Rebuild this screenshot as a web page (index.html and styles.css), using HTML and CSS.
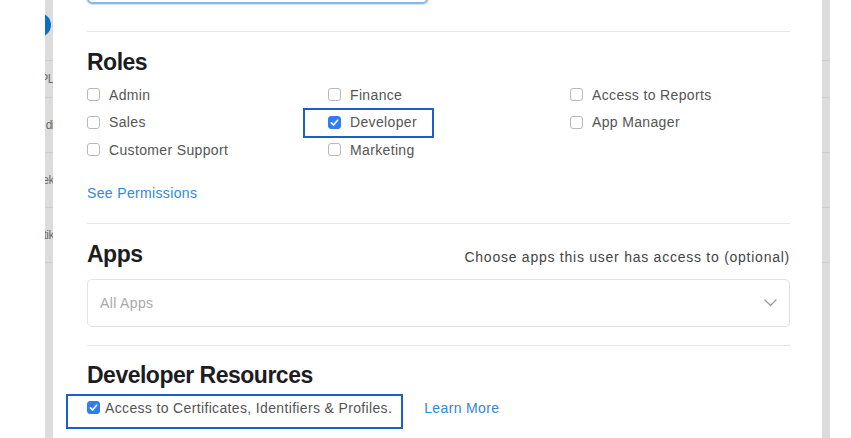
FILE: index.html
```html
<!DOCTYPE html>
<html>
<head>
<meta charset="utf-8">
<link rel="stylesheet" href="styles.css">
</head>
<body>
<div class="page">
  <div class="edge"></div>
  <div class="strip strip-left">
    <div class="srow srow-top"><span class="dot"></span></div>
    <div class="srow srow-a"><span class="frag">PL</span></div>
    <div class="srow srow-b"><span class="frag">di</span></div>
    <div class="srow srow-b"><span class="frag">ek</span></div>
    <div class="srow srow-b"><span class="frag">tik</span></div>
    <div class="srow srow-rest"></div>
  </div>

  <main class="modal">
    <div class="name-input"></div>
    <div class="divider div-top"></div>

    <h2 class="heading roles-heading">Roles</h2>
    <div class="roles-grid">
      <label class="opt"><span class="box"></span><span class="txt">Admin</span></label>
      <label class="opt"><span class="box"></span><span class="txt">Finance</span></label>
      <label class="opt"><span class="box"></span><span class="txt">Access to Reports</span></label>
      <label class="opt"><span class="box"></span><span class="txt">Sales</span></label>
      <label class="opt opt-marked"><span class="mark mark-dev"></span><span class="box checked"><svg viewBox="0 0 13 13" width="13" height="13"><path d="M3.4 6.8 L5.6 9 L9.6 4.2" fill="none" stroke="#fff" stroke-width="1.7" stroke-linecap="round" stroke-linejoin="round"/></svg></span><span class="txt">Developer</span></label>
      <label class="opt"><span class="box"></span><span class="txt">App Manager</span></label>
      <label class="opt"><span class="box"></span><span class="txt">Customer Support</span></label>
      <label class="opt"><span class="box"></span><span class="txt">Marketing</span></label>
    </div>
    <a class="link see-perm">See Permissions</a>
    <div class="divider div-mid"></div>

    <div class="apps-head">
      <h2 class="heading">Apps</h2>
      <span class="hint">Choose apps this user has access to (optional)</span>
    </div>
    <div class="select">
      <span class="placeholder">All Apps</span>
      <svg class="chev" viewBox="0 0 13 8" width="13" height="8"><path d="M1 1 L6.5 6.5 L12 1" fill="none" stroke="#9a9a9a" stroke-width="1.2" stroke-linecap="round" stroke-linejoin="round"/></svg>
    </div>
    <div class="divider div-low"></div>

    <h2 class="heading dev-heading">Developer Resources</h2>
    <div class="dev-row">
      <label class="opt-inline"><span class="mark mark-res"></span><span class="box checked"><svg viewBox="0 0 13 13" width="13" height="13"><path d="M3.4 6.8 L5.6 9 L9.6 4.2" fill="none" stroke="#fff" stroke-width="1.7" stroke-linecap="round" stroke-linejoin="round"/></svg></span><span class="txt">Access to Certificates, Identifiers &amp; Profiles.</span></label>
      <a class="link learn">Learn More</a>
    </div>
  </main>

  <div class="strip strip-right">
    <div class="srow srow-top"></div>
    <div class="srow srow-a"></div>
    <div class="srow srow-b"></div>
    <div class="srow srow-b"></div>
    <div class="srow srow-b"></div>
    <div class="srow srow-rest"></div>
  </div>
  <div class="edge-right"></div>
</div>
</body>
</html>
```
FILE: styles.css
```css
* { box-sizing: border-box; }
html, body { margin: 0; padding: 0; background: #fff; }
body {
  font-family: "Liberation Sans", Arial, sans-serif;
  width: 851px;
  height: 438px;
  overflow: hidden;
}
.page {
  display: flex;
  height: 438px;
  overflow: hidden;
}
.edge { width: 45px; flex: none; background: #fff; position: relative; z-index: 2; }
.edge-right { width: 21px; flex: none; background: #fff; }

.strip {
  width: 8px;
  flex: none;
  background: #dcdcdc;
  display: flex;
  flex-direction: column;
  overflow: hidden;
}
.srow {
  display: flex;
  align-items: center;
  justify-content: flex-end;
  border-bottom: 1px solid #cdcdcd;
  flex: none;
  white-space: nowrap;
}
.srow-top { height: 61px; justify-content: flex-start; }
.srow-a { height: 37px; }
.srow-b { height: 55px; }
.srow-rest { flex: 1; border-bottom: none; }
.frag {
  font-size: 12px;
  letter-spacing: -0.5px;
  color: #6a6a6a;
  margin-right: -1px;
}
.dot {
  width: 24px;
  height: 24px;
  border-radius: 50%;
  background: #0a6fc4;
  margin-left: -18px;
  margin-top: -10px;
  flex: none;
}

.modal {
  width: 769px;
  flex: none;
  background: #fff;
  padding: 0 32px 0 34px;
  display: flex;
  flex-direction: column;
}
.name-input {
  width: 341px;
  height: 34px;
  margin-top: -30px;
  border: 2px solid #86b8ea;
  border-radius: 5px;
  box-shadow: 0 0 0 1px #d3e6f8;
  flex: none;
}
.divider { height: 1px; background: #e6e6e6; flex: none; }
.div-top { margin-top: 27px; }
.div-mid { margin-top: 20px; }
.div-low { margin-top: 18px; }

.heading {
  margin: 0;
  font-size: 23px;
  line-height: 26px;
  font-weight: bold;
  letter-spacing: -0.5px;
  color: #1d1d1f;
}
.roles-heading { margin-top: 17px; }
.roles-grid {
  margin-top: 6px;
  display: grid;
  grid-template-columns: 241px 242px 1fr;
  grid-auto-rows: 27.5px;
}
.opt, .opt-inline {
  display: flex;
  align-items: center;
  font-size: 14px;
  letter-spacing: 0.35px;
  color: #555;
  position: relative;
  white-space: nowrap;
}
.opt { justify-self: start; }
.box {
  width: 13px;
  height: 13px;
  border: 1px solid #b9b9b9;
  border-radius: 3px;
  background: #fff;
  flex: none;
  margin-right: 9px;
  display: flex;
}
.box.checked {
  background: #2f7cf3;
  border-color: #2f7cf3;
}
.box.checked svg { margin: -1px; flex: none; }
.opt-inline .box { margin-right: 5px; }
.mark {
  position: absolute;
  border: 2px solid #1a5fce;
  pointer-events: none;
}
.mark-dev { left: -25px; right: -17px; top: -1px; bottom: -2px; }
.mark-res { left: -21px; right: -11px; top: -6px; bottom: -13px; }

.link {
  color: #3088d8;
  font-size: 14px;
  letter-spacing: 0.35px;
  line-height: 20px;
  text-decoration: none;
}
.see-perm { margin-top: 19px; align-self: flex-start; }

.apps-head {
  margin-top: 17px;
  display: flex;
  justify-content: space-between;
  align-items: baseline;
}
.hint {
  font-size: 14px;
  letter-spacing: 0.75px;
  color: #444;
}
.select {
  margin-top: 12px;
  height: 48px;
  border: 1px solid #e2e2e2;
  border-radius: 5px;
  display: flex;
  align-items: center;
  justify-content: space-between;
  padding: 0 12px 0 12px;
  flex: none;
}
.placeholder {
  font-size: 14px;
  letter-spacing: 0.35px;
  color: #a9a9a9;
}
.chev { flex: none; }

.dev-heading { margin-top: 16px; }
.dev-row {
  margin-top: 10px;
  display: flex;
  align-items: center;
  height: 20px;
  gap: 32px;
}
```
